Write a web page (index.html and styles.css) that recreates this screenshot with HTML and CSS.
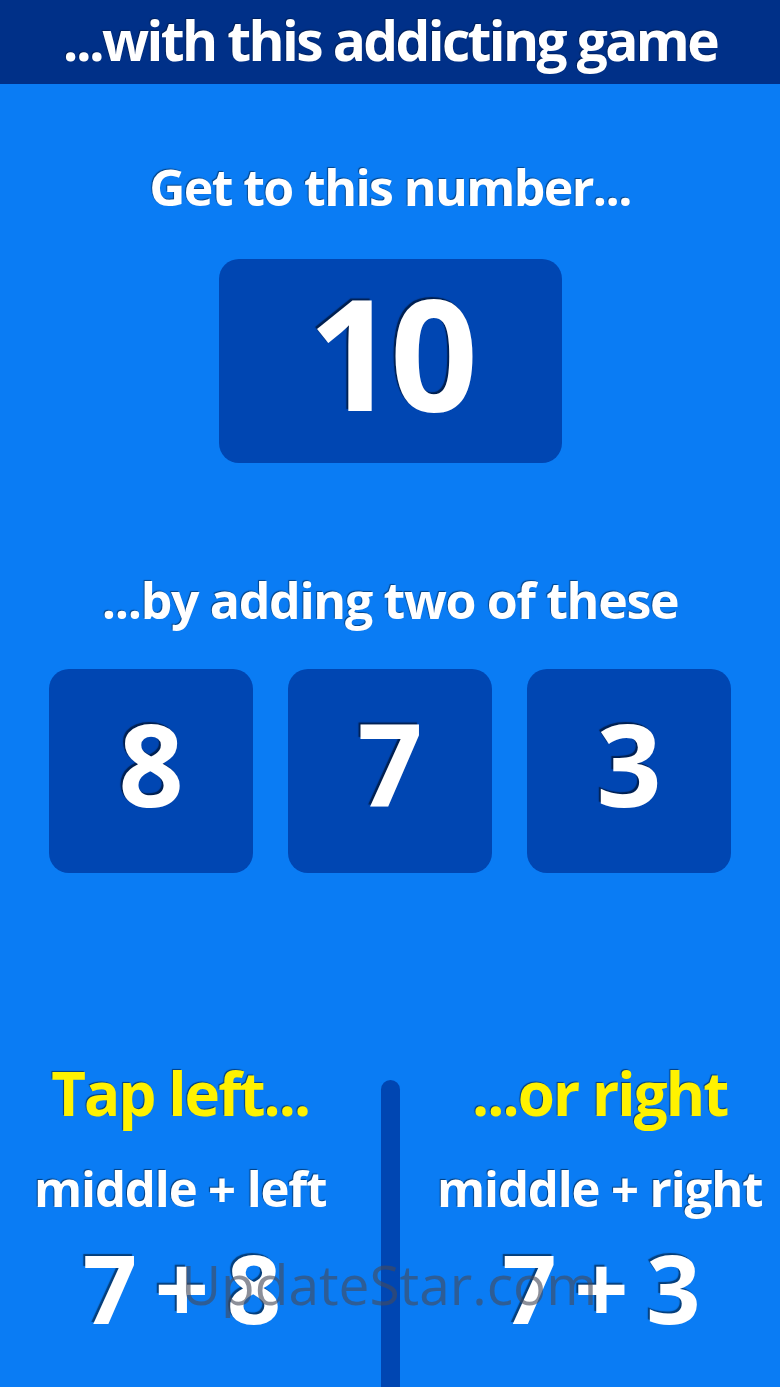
FILE: index.html
```html
<!DOCTYPE html>
<html>
<head>
<meta charset="utf-8">
<link rel="stylesheet" href="styles.css">
</head>
<body>
<div class="page">
  <header class="topbar">...with this addicting game</header>
  <main class="content">
    <h2 class="prompt first">Get to this number...</h2>
    <div class="target">10</div>
    <h2 class="prompt second">...by adding two of these</h2>
    <div class="cards">
      <div class="card">8</div>
      <div class="card">7</div>
      <div class="card">3</div>
    </div>
    <section class="choices">
      <div class="side left">
        <div class="tap">Tap left...</div>
        <div class="rule">middle + left</div>
        <div class="sum">7 + 8</div>
      </div>
      <div class="divider"></div>
      <div class="side right">
        <div class="tap">...or right</div>
        <div class="rule">middle + right</div>
        <div class="sum">7 + 3</div>
      </div>
    </section>
  </main>
  <div class="watermark">UpdateStar.com</div>
</div>
</body>
</html>
```

FILE: styles.css
```css
* { box-sizing: border-box; margin: 0; padding: 0; }
html, body { width: 780px; height: 1387px; overflow: hidden; }
body {
  background: #0a7cf4;
  font-family: "Open Sans", "Liberation Sans", sans-serif;
  font-weight: 700;
  font-stretch: 90%;
  color: #fff;
}
.page { position: relative; width: 780px; height: 1387px; }
.topbar {
  height: 84px;
  background: #003088;
  display: flex;
  align-items: center;
  justify-content: center;
  font-size: 55px;
  letter-spacing: -2.6px;
  line-height: 1;
  padding-bottom: 6px;
  white-space: nowrap;
  text-shadow: -1px -1px 1px rgba(0,0,0,0.35);
}
.content { display: flex; flex-direction: column; align-items: center; }
.prompt {
  font-weight: 700;
  font-size: 50px;
  line-height: 60px;
  height: 60px;
  white-space: nowrap;
  text-shadow: -1px -1px 1px rgba(0,0,0,0.45);
}
.prompt.first { margin-top: 73px; letter-spacing: -1.6px; }
.prompt.second { margin-top: 107px; letter-spacing: -1.3px; }
.target {
  margin-top: 42px;
  width: 343px;
  height: 204px;
  background: #0046b2;
  border-radius: 20px;
  display: flex;
  align-items: center;
  justify-content: center;
  font-size: 154px;
  letter-spacing: -6px;
  line-height: 1;
  padding-bottom: 20px;
  text-shadow: -2px -2px 1px rgba(0,0,0,0.55);
}
.cards {
  margin-top: 39px;
  display: flex;
  gap: 35px;
}
.card {
  width: 204px;
  height: 204px;
  background: #0046b2;
  border-radius: 20px;
  display: flex;
  align-items: center;
  justify-content: center;
  font-size: 114px;
  line-height: 1;
  padding-bottom: 16px;
  text-shadow: -2px -2px 1px rgba(0,0,0,0.55);
}
.choices {
  margin-top: 190px;
  width: 780px;
  display: grid;
  grid-template-columns: 1fr 19px 1fr;
  height: 324px;
}
.side {
  display: flex;
  flex-direction: column;
  align-items: center;
  white-space: nowrap;
  text-shadow: -1px -1px 1px rgba(0,0,0,0.5);
}
.side.left { padding-right: 20px; }
.side.right { padding-left: 20px; }
.divider {
  margin-top: 17px;
  background: #0046b2;
  border-radius: 10px 10px 0 0;
}
.tap {
  color: #fff200;
  font-size: 60px;
  letter-spacing: -1.9px;
  line-height: 60px;
  height: 60px;
}
.rule {
  margin-top: 35px;
  font-size: 49px;
  letter-spacing: -1.1px;
  line-height: 60px;
  height: 60px;
}
.sum {
  margin-top: 19px;
  font-size: 95px;
  letter-spacing: -3.5px;
  line-height: 100px;
  height: 100px;
  text-shadow: -2px -2px 1px rgba(0,0,0,0.5);
}
.watermark {
  position: absolute;
  left: 181px;
  top: 1246px;
  font-family: "Open Sans", "Liberation Sans", sans-serif;
  font-weight: 400;
  font-stretch: 100%;
  font-size: 55px;
  line-height: 76px;
  color: rgba(70, 75, 90, 0.62);
}
```
